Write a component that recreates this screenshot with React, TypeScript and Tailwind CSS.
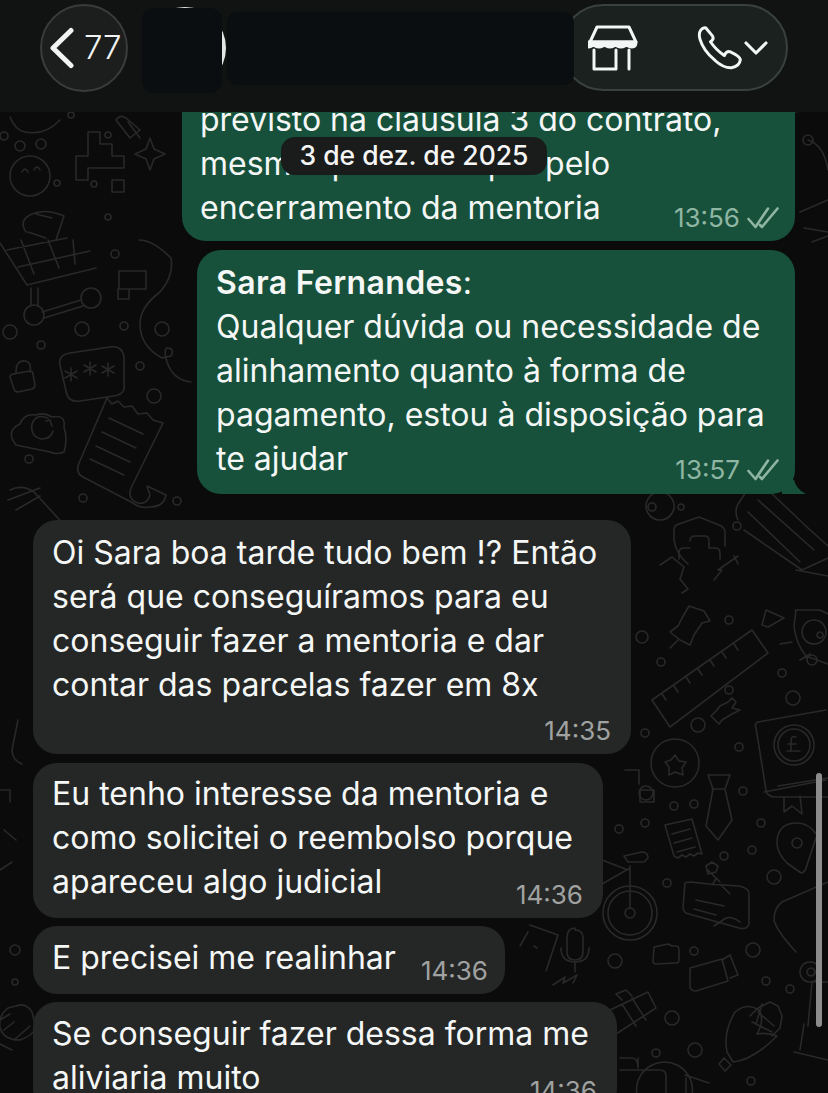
import React from 'react';
import { ChevronDown } from 'lucide-react';

const dots: [number, number, number][] = [
  [4, 136, 4], [20, 146, 5], [41, 144, 5], [57, 183, 3], [94, 184, 3], [108, 135, 3], [71, 115, 3], [108, 217, 3],
  [10, 332, 7], [41, 345, 4], [82, 329, 7], [124, 326, 4], [162, 329, 7], [115, 254, 4], [140, 366, 4], [154, 396, 7],
  [29, 459, 4], [83, 498, 4], [177, 501, 4], [652, 507, 4], [681, 507, 3], [737, 526, 4], [642, 637, 6], [661, 662, 4],
  [729, 620, 4], [782, 673, 4], [793, 698, 7], [729, 690, 4], [698, 725, 7], [645, 733, 4], [739, 747, 4], [646, 793, 7],
  [674, 806, 4], [694, 804, 4], [743, 791, 4], [761, 823, 4], [752, 850, 4], [724, 856, 4], [619, 829, 4], [645, 823, 4],
  [667, 883, 4], [774, 877, 7], [694, 951, 4], [753, 950, 7], [766, 981, 4], [790, 989, 4], [615, 961, 7], [672, 1018, 7],
  [695, 1050, 7], [656, 1053, 4], [751, 1081, 4], [15, 950, 5], [15, 982, 3], [812, 660, 5], [808, 140, 5],
];

// Chat wallpaper doodles, in page coordinates
const ChatWallpaper = () => (
  <svg className="absolute left-0 top-0" width="828" height="1093" viewBox="0 0 828 1093" fill="none" stroke="#292929" strokeWidth="1.6" strokeLinecap="round" strokeLinejoin="round">
    {dots.map(([cx, cy, r], i) => (
      <circle key={i} cx={cx} cy={cy} r={r} />
    ))}
    {/* face, star, blocks */}
    <circle cx="30" cy="176" r="20" />
    <path d="M22 172q3-6 6 0M34 170q3-6 6 0M60 120q-15 16-35 12-10-2-15-15M150 138l4 11 11 5-11 5-4 11-4-11-11-5 11-5z" />
    <path d="M100 132h-12v24h-12v24h12v-12h36v-12h-12v-12h-12zM112 180h12v12h-12z" />
    <path d="M26 232q-8-12 6-18 14-6 32 2l-8 24M128 122l12 16M126 118q-6-4-10 2l14 18 10-8zM36 214l16 4M28 232l18 6" />
    {/* cart */}
    <path d="M0 243l27 42 69-17M7 250l60-12M18 267l72-16M21 240l13 34M48 240l11 28M73 240l2 24M31 288v18M38 288v18M42 312l39-12M44 318l39-12" />
    <circle cx="34" cy="315" r="10" />
    <circle cx="91" cy="298" r="10" />
    <path d="M139 240q14 0 32 18 3 18-11 34-20 15-20 32 0 22 22 34l9-2q4-8-4-8-4 2 0 14 6 18 24 20" />
    <path d="M119 271h27v18h-27zM118 289h11v10h-11z" />
    {/* password card */}
    <path d="M70 353l40-6q12-2 14 10v27q2 10-10 12l-34 5q-12 2-14-10l-6-26q-2-10 10-12z" />
    <path d="M71 368v13M65 371l12 7M65 378l12-7M90 362v13M84 365l12 7M84 372l12-7M108 363v13M102 366l12 7M102 373l12-7" />
    <path d="M16 372q0-12 9-11 7 1 5 11M13 374l17-3q3 0 3 3l2 11q0 3-3 4l-14 3q-3 0-4-3l-4-12q0-3 5-3z" />
    {/* cloud, receipt */}
    <path d="M16 445q-11-14 4-21 4-11 16-9 8-3 16 2 14-3 12 10 4 12 0 25-7 3-14 0z" />
    <path d="M48 418q-12-5-16 6-2 12 9 15 10 0 12-8M46 421l4-1 2 6" />
    <path d="M107 398l5 6 6-3 6 6 8-1 6 8 9-1 6 7 10 3-32 65q-4 11 7 15 9 2 12-8l-3-9 19 9q-2 12-17 12-8 2-16-4l-50-26q-8-4-4-14z" />
    <path d="M109 418l34 16M102 432l34 16M96 446l34 16M90 459l34 16" />
    <path d="M10 490q12-6 24 2l44 48M8 500l32-12M16 510l24-14" />
    {/* shield, pencil */}
    <path d="M699 517l20 8q6 2 6 8v13M674 530v10q2 14 14 24M674 530q0-5 5-6l20-7M690 541q0-5 5-5h10q4 0 4 5v7h6q5 0 5 5v6M690 548h-6q-5 0-5 5v6" />
    <path d="M768 490l40 38 20 18M758 500l56 50M748 512l52 50M738 520q-4-8 0-16l8-12M744 530l58 40 26-12M796 570l32 6" />
    <path d="M660 492a14 14 0 1 0 0.1 0" />
    <path d="M738 556l-20 14 4 0-8 10M734 556l4 8" />
    <path d="M660 565l12-8 12 10-4 12 8 10-6 4" />
    {/* ruler */}
    <path d="M652 700l100-70 16 23-98 74zM662 694l4 6M674 686l4 6M686 677l4 6M698 669l4 6M710 660l4 6M722 652l4 6M734 644l4 6" />
    {/* pushpin, triangle */}
    <path d="M689 606l15 5 6 10-8 2-8 12-4 10-10-5-10-8 8-6 4-8zM678 640l-8 8" />
    <path d="M766 610l18 8-16 9-6-2z" />
    <path d="M795 610h25l8 4M796 610l-2 16q2 18 12 30l22 8M814 620a12 12 0 1 0 0.1 0M820 632a3 3 0 1 0 0.1 0M780 644l12-2M800 660l10-6" />
    <path d="M720 706l8-4 4-4 4 4-4 6 8 2-8 4-10 6-3 4-8-8 6-6z" />
    {/* star coin, tie, book */}
    <circle cx="675" cy="763" r="24" />
    <path d="M675 755l4 6 7 1-4 6 1 7-8-3-6 3 0-8-4-5 6-2z" />
    <path d="M708 775h22l-5 14 7 31-14 20-12-14 7-37zM712 789h13" />
    <path d="M758 722l68-12M756 728q-2-4 2-6M756 728l10 62q1 7 10 7h52M764 792l62-12M778 786l50-8M784 798v14l8-6 10 8-2-18" />
    <circle cx="794" cy="745" r="20" />
    <circle cx="794" cy="745" r="16" />
    <path d="M796 737q-5-2-5 4v10m-4 0h13m-12-7h8" />
    {/* notes, pin */}
    <path d="M665 825l27-6 10 35-4-1-4 3-4-2-4 3-4-2-4 3-4-2zM672 834l18-5M674 843l18-5M677 852l18-5" />
    <path d="M797 823q-20 0-20 20 0 10 10 20l14 10q4 0 6-8l10-30q-8-12-20-12z" />
    <circle cx="797" cy="843" r="5" />
    <path d="M685 883l-2 24q0 6 6 7l50 14q8 2 10-4v-30q0-6-10-8l-30-2-18-2q-6 0-6 1zM696 900l28 6M694 909l22 6M708 870l12 12M706 866l6-4 6 4-2 6-8 2zM712 885l4-6M722 886l8 8M714 926l12-8q6-2 14 4" />
    {/* bike */}
    <circle cx="630" cy="913" r="27" />
    <circle cx="630" cy="913" r="22" />
    <circle cx="630" cy="913" r="5" />
    <path d="M630 908v-42M630 868l-28 16M602 860l26 10M624 856l18-4q6 0 6 6l-4 4-16 0z" />
    {/* right lower */}
    <path d="M828 882l-46 20q-8 6-8 18 2 10 22 32M810 962a10 10 0 1 0 0.1 0M811 968a4 4 0 1 0 0.1 0M812 982l-4 44M828 982l-16 0M794 1052l34 8M800 1050l4-26" />
    <path d="M654 947l14-3 4 2h4q3 0 3 4v10q0 3-3 3l-20 1q-3 0-3-3z" />
    <path d="M690 968l32-9 6 22-32 10q-5 0-6-4zM722 960l8-5 8 20-8 3" />
    <path d="M610 1010l38-18 8 16-40 26zM622 1000l-6-6 10-4 6 6M622 1004l14 22M632 998l14 22" />
    {/* corn */}
    <path d="M735 1012q-12 20-8 40l6 10q20-2 44-26-10-4-20-2 8-14 2-24-12-8-24 2zM750 1016l8-8 12-6 8 4 4 10-2 12-8 8M758 1012l16 14M752 1022l20 10M762 1004l-6 20M724 1058l7 7-6 6-6-7z" />
    <path d="M620 1058h12q6 0 6 10v-10M620 1070h40q6 0 6 6v17M664 1062a28 28 0 1 0 1 0M685 1075l24 8M686 1078v15" />
    {/* lower left and gutter */}
    <path d="M8 1008q-10 8-8 20 4 12 20 12 12-4 16-12l-4-16q-6-10-16-6zM0 1020l10-6M4 1030l10-8M14 1040l16-14M0 1044l12 6" />
    <path d="M575 928q-8 0-8 10v14q0 8 8 8t8-8v-14q0-8-8-8zM561 948q0 14 14 14t14-14M575 962v10" />
    <path d="M553 985l12-8-2 6 14-8-4 8M530 925l28 10-12 36M520 946l8-14M534 946l3 2" />
    <path d="M18 720l-6 30q0 10 10 14M0 790h10v12M4 830l12 10M0 870l12-8" />
    <path d="M625 770h14v14M640 790h14v12h-14z" />
    <path d="M808 140q16 5 20 30M796 112l32-8M800 212l28-12M804 228l24 4M812 242l16-6" />
  </svg>
);

const BackIcon = () => (
  <svg width="28" height="42" viewBox="0 0 28 42" fill="none" stroke="#f2f4f3" strokeWidth="5" strokeLinecap="round" strokeLinejoin="round" className="shrink-0">
    <path d="M23 3.500L5 21l18 17.500" />
  </svg>
);

const StoreIcon = () => (
  <svg width="50" height="46" viewBox="0 0 50 46" fill="none" stroke="#f2f6f4" strokeWidth="3" strokeLinecap="round" strokeLinejoin="round" className="shrink-0">
    <path d="M9 2h32l7 15H2z" />
    <path fill="#f2f6f4" d="M2 17h46q0 5-4 5-4 0-5.500-3-1.500 3-5.500 3t-5.500-3q-1.500 3-5.500 3t-5.500-3q-1.500 3-5.500 3t-5.500-3q-1.500 3-5.500 3-4 0-4-5z" />
    <path d="M6 25v19h22V25M41 25v19" />
  </svg>
);

const PhoneIcon = () => (
  <svg width="46" height="45" viewBox="-5 -2 140 135" fill="none" stroke="#f2f6f4" strokeWidth="9" strokeLinecap="round" strokeLinejoin="round" className="shrink-0">
    <path d="M22 6Q14 3 7 12Q-1 22 4 40Q14 75 50 105Q75 128 100 127Q125 122 127 102Q125 92 95 78Q84 76 78 90Q52 72 36 48Q48 42 42 30Z" />
  </svg>
);

const DoubleCheck = ({ color }: { color: string }) => (
  <svg width="32" height="22" viewBox="0 0 32 22" fill="none" stroke={color} strokeWidth="2.600" strokeLinecap="round" strokeLinejoin="round">
    <path d="M1.500 12l7 8L21 1.500" />
    <path d="M13 18l2 2L30.500 1.500" />
  </svg>
);

interface BubbleProps {
  lines: React.ReactNode[];
  time: string;
  className: string;
  outgoing?: boolean;
  timeClass?: string;
}

const Bubble: React.FC<BubbleProps> = ({ lines, time, className, outgoing, timeClass }) => (
  <div className={`relative rounded-[24px] text-[32px] leading-[44px] text-[#f5f7f6] ${outgoing ? 'bg-[#17513b]' : 'bg-[#252726]'} ${className}`}>
    {lines.map((line, i) => (
      <div key={i} className="whitespace-nowrap">
        {line}
      </div>
    ))}
    <div className={`absolute flex items-center gap-[7px] text-[26px] leading-[30px] ${outgoing ? 'text-[#8fb5a3]' : 'text-[#a0a2a1]'} ${timeClass ?? 'bottom-[8px] right-[20px]'}`}>
      <span>{time}</span>
      {outgoing && <DoubleCheck color="#8fb5a3" />}
    </div>
  </div>
);

export default function App() {
  return (
    <div className="relative flex h-[1093px] w-[828px] flex-col overflow-hidden bg-[#0b0b0b] font-['Inter','Noto_Sans',sans-serif]">
      <ChatWallpaper />

      {/* Top bar */}
      <header className="relative z-10 flex h-[112px] shrink-0 items-start bg-[#111312] pl-[40px] pt-[4px]">
        <button className="flex h-[88px] w-[88px] shrink-0 items-center rounded-full border-2 border-[#3a3c3b] bg-[#1c1e1d] pl-[6px] text-[#f2f4f3]">
          <BackIcon />
          <span className="ml-[8px] text-[33px] font-light">77</span>
        </button>
        <div className="absolute left-[144px] top-[7px] h-[82px] w-[82px] rounded-full bg-[#e4e6e5]" />
        <div className="relative ml-[14px] mt-[4px] h-[85px] w-[80px] shrink-0 rounded-[12px] bg-[#0a0e10]" />
        <div className="relative z-10 ml-[5px] mt-[8px] h-[73px] w-[347px] shrink-0 rounded-[10px] bg-[#0a0e10]" />
        <div className="relative -ml-[14px] flex h-[87px] w-[228px] shrink-0 items-center rounded-full border-2 border-[#39413e] bg-[#1a211e] pl-[26px]">
          <StoreIcon />
          <div className="ml-[59px]">
            <PhoneIcon />
          </div>
          <ChevronDown size={40} strokeWidth={1.900} className="-ml-[7px] shrink-0 text-[#f2f6f4]" />
        </div>
      </header>

      {/* Messages */}
      <main className="relative flex-1 overflow-hidden">
        <div className="relative flex flex-col">
          <div className="mr-[33px] -mt-[31px] self-end">
            <Bubble
              outgoing
              className="h-[160px] w-[613px] pl-[18px] pt-[17px]"
              time="13:56"
              timeClass="bottom-[8px] right-[16px]"
              lines={['previsto na cláusula 3 do contrato,', 'mesmo que você opte pelo', 'encerramento da mentoria']}
            />
          </div>

          <div className="relative mr-[33px] mt-[9px] self-end">
            <Bubble
              outgoing
              className="h-[244px] w-[598px] pl-[19px] pt-[11px]"
              time="13:57"
              timeClass="bottom-[9px] right-[16px]"
              lines={[
                <><b className="font-semibold tracking-[0.35px]">Sara Fernandes</b>:</>,
                'Qualquer dúvida ou necessidade de',
                'alinhamento quanto à forma de',
                'pagamento, estou à disposição para',
                'te ajudar',
              ]}
            />
            <svg className="absolute -right-[11px] bottom-0" width="24" height="14" viewBox="0 0 24 14">
              <path d="M0 0h12q2 9 12 14H0z" fill="#17513b" />
            </svg>
          </div>

          <Bubble
            className="ml-[33px] mt-[26px] h-[234px] w-[598px] pl-[19px] pt-[11px]"
            time="14:35"
            lines={[
              'Oi Sara boa tarde tudo bem !? Então',
              'será que conseguíramos para eu',
              'conseguir fazer a mentoria e dar',
              'contar das parcelas fazer em 8x',
            ]}
          />

          <Bubble
            className="ml-[33px] mt-[9px] h-[155px] w-[570px] pl-[19px] pt-[9px]"
            time="14:36"
            lines={['Eu tenho interesse da mentoria e', 'como solicitei o reembolso porque', 'apareceu algo judicial']}
          />

          <Bubble
            className="ml-[33px] mt-[8px] h-[68px] w-[472px] pl-[19px] pt-[10px]"
            time="14:36"
            timeClass="bottom-[8px] right-[17px]"
            lines={['E precisei me realinhar']}
          />

          <Bubble
            className="ml-[33px] mt-[8px] h-[110px] w-[584px] pl-[19px] pt-[10px]"
            time="14:36"
            timeClass="bottom-[6px] right-[20px]"
            lines={['Se conseguir fazer dessa forma me', 'aliviaria muito']}
          />
        </div>

        {/* Date pill */}
        <div className="absolute left-[281px] top-[25px] flex h-[38px] w-[266px] items-center justify-center rounded-[14px] bg-[#1a1c1b] text-[26.500px] font-medium text-[#f5f5f5]">
          3 de dez. de 2025
        </div>

        {/* Scroll indicator */}
        <div className="absolute left-[816px] top-[661px] h-[254px] w-[6px] rounded-full bg-[#8c8c8c]" />
      </main>
    </div>
  );
}
